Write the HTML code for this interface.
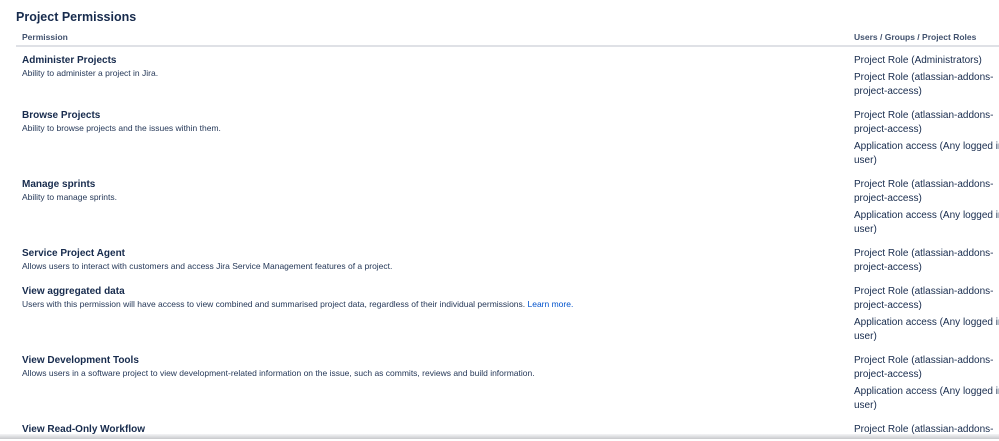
<!DOCTYPE html><html><head><style>
body{margin:0;width:999px;height:439px;overflow:hidden;background:#fff;font-family:"Liberation Sans",sans-serif;color:#172b4d;position:relative}
div{position:absolute;white-space:nowrap;line-height:14px}
.t{font-weight:bold;font-size:10px;left:22px}
.d{font-size:8.5px;left:22px;color:#253858;margin-top:-1.5px}
.r{font-size:10px;left:854px}
.h{font-size:8.5px;font-weight:bold;color:#42526e}
a{color:#0052cc;text-decoration:none}
.w{top:2px;left:0;width:999px;height:439px}
</style></head><body>
<div style="left:16px;top:10px;font-size:12.5px;font-weight:bold">Project Permissions</div>
<div class="h" style="left:22px;top:30px">Permission</div>
<div class="h" style="left:854px;top:30px">Users / Groups / Project Roles</div>
<div style="left:16px;top:45px;width:983px;height:2px;background:#dfe1e6"></div>
<div class="w">
<div class="t" style="top:52px">Administer Projects</div>
<div class="d" style="top:65px">Ability to administer a project in Jira.</div>
<div class="r" style="top:52px">Project Role (Administrators)</div>
<div class="r" style="top:69px">Project Role (atlassian-addons-</div>
<div class="r" style="top:83px">project-access)</div>

<div class="t" style="top:107px">Browse Projects</div>
<div class="d" style="top:120px">Ability to browse projects and the issues within them.</div>
<div class="r" style="top:107px">Project Role (atlassian-addons-</div>
<div class="r" style="top:121px">project-access)</div>
<div class="r" style="top:138px">Application access (Any logged in</div>
<div class="r" style="top:152px">user)</div>

<div class="t" style="top:176px">Manage sprints</div>
<div class="d" style="top:189px">Ability to manage sprints.</div>
<div class="r" style="top:176px">Project Role (atlassian-addons-</div>
<div class="r" style="top:190px">project-access)</div>
<div class="r" style="top:207px">Application access (Any logged in</div>
<div class="r" style="top:221px">user)</div>

<div class="t" style="top:245px">Service Project Agent</div>
<div class="d" style="top:258px">Allows users to interact with customers and access Jira Service Management features of a project.</div>
<div class="r" style="top:245px">Project Role (atlassian-addons-</div>
<div class="r" style="top:259px">project-access)</div>

<div class="t" style="top:283px">View aggregated data</div>
<div class="d" style="top:296px">Users with this permission will have access to view combined and summarised project data, regardless of their individual permissions. <a>Learn more.</a></div>
<div class="r" style="top:283px">Project Role (atlassian-addons-</div>
<div class="r" style="top:297px">project-access)</div>
<div class="r" style="top:314px">Application access (Any logged in</div>
<div class="r" style="top:328px">user)</div>

<div class="t" style="top:352px">View Development Tools</div>
<div class="d" style="top:365px">Allows users in a software project to view development-related information on the issue, such as commits, reviews and build information.</div>
<div class="r" style="top:352px">Project Role (atlassian-addons-</div>
<div class="r" style="top:366px">project-access)</div>
<div class="r" style="top:383px">Application access (Any logged in</div>
<div class="r" style="top:397px">user)</div>

<div class="t" style="top:421px">View Read-Only Workflow</div>
<div class="r" style="top:421px">Project Role (atlassian-addons-</div>
</div>
<div style="left:0;top:434px;width:999px;height:5px;background:linear-gradient(#f4f5f7,#c8c9cc)"></div>
</body></html>
